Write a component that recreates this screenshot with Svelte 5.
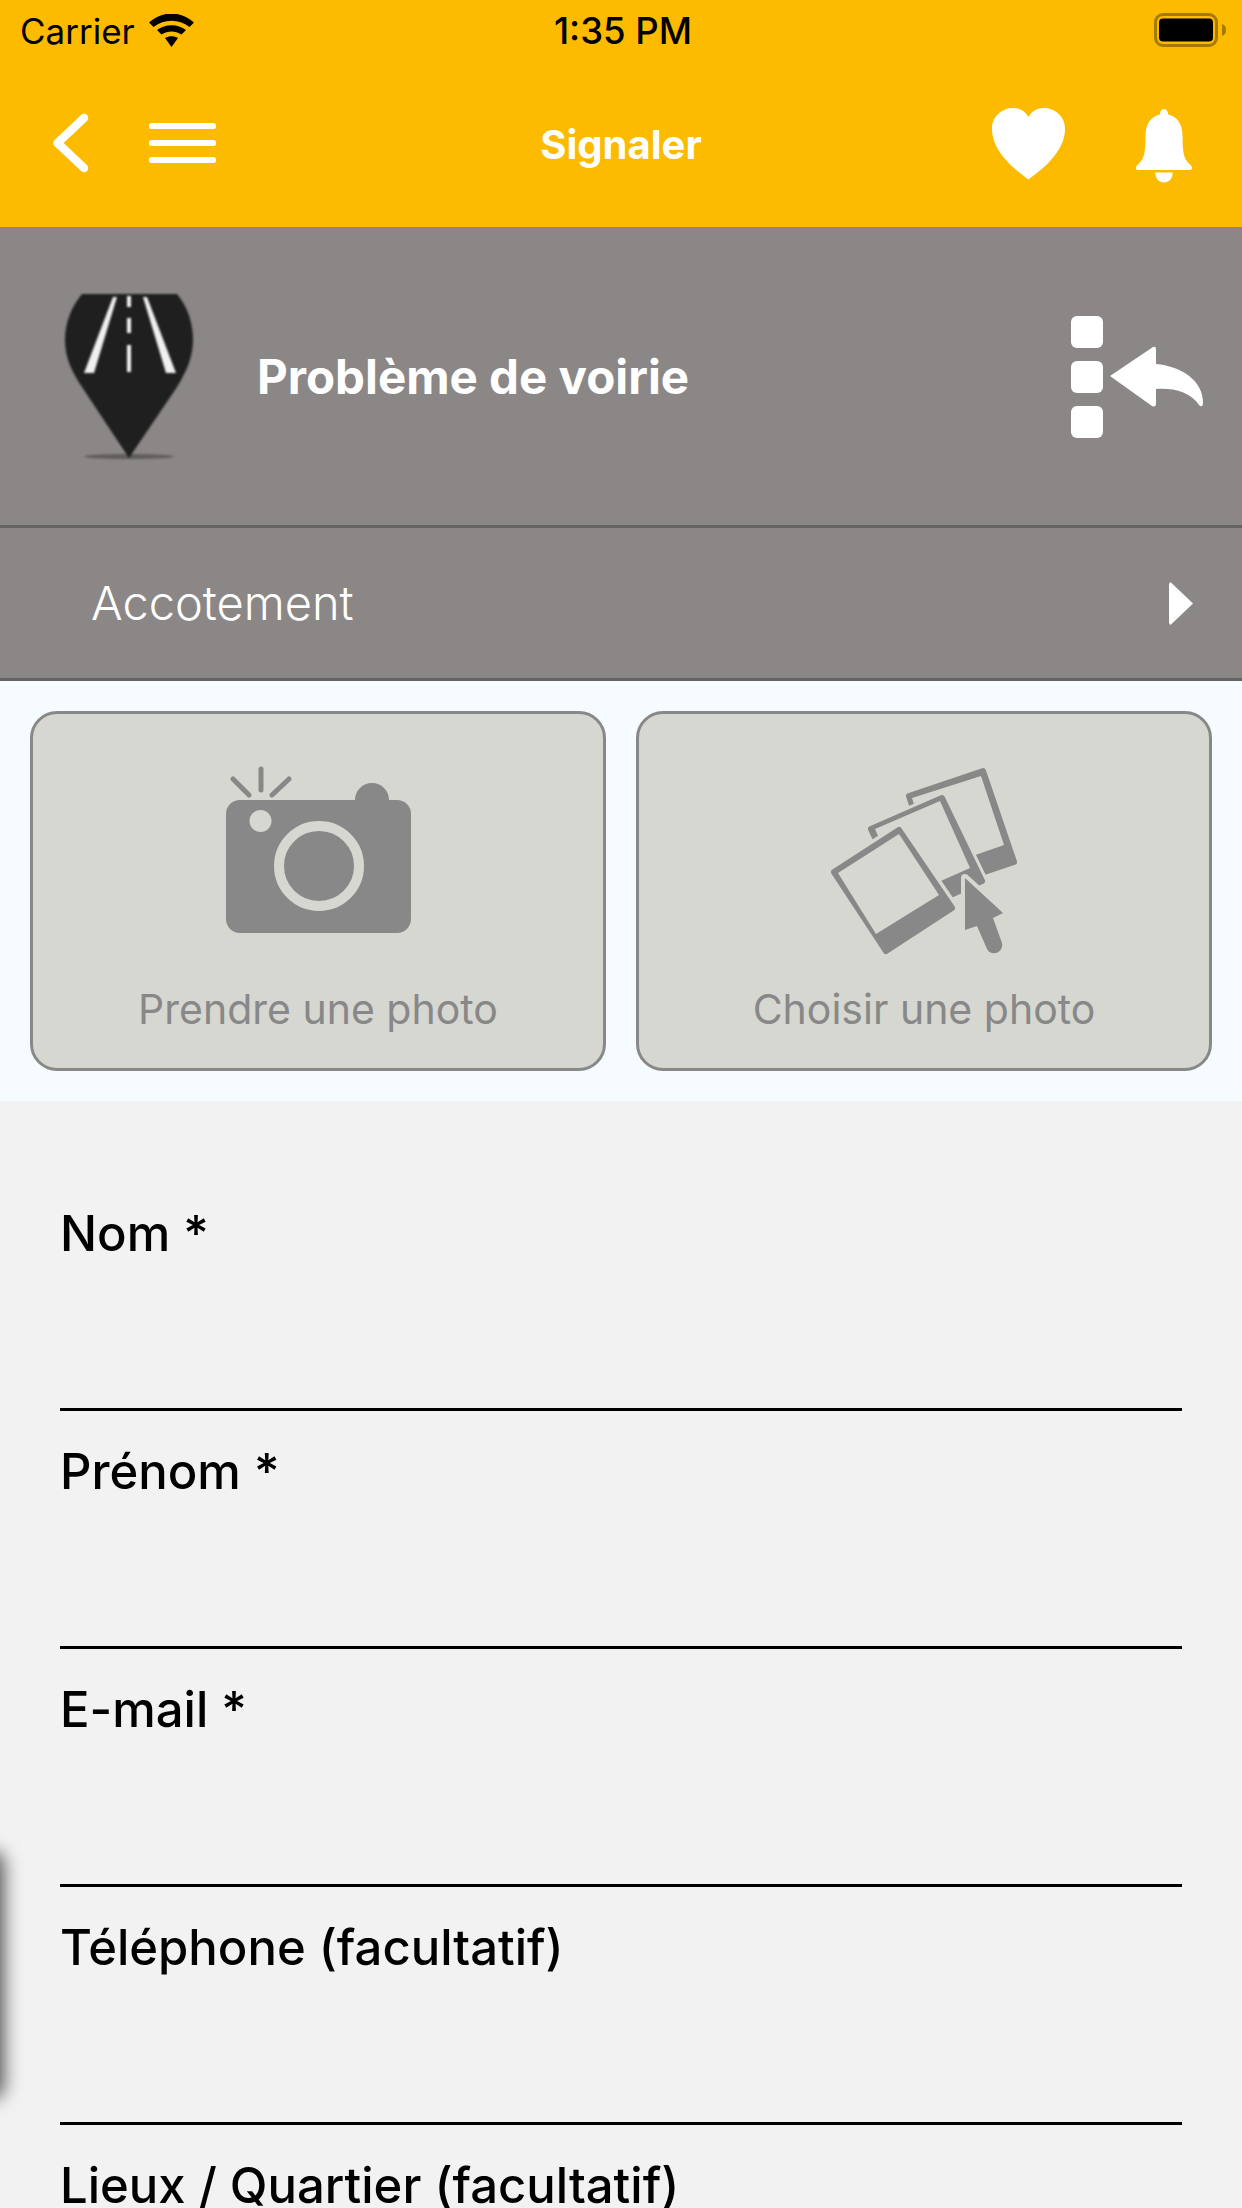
<script>
  const fields = ['Nom *', 'Prénom *', 'E-mail *', 'Téléphone (facultatif)', 'Lieux / Quartier (facultatif)'];
</script>

<div class="page">
  <header class="top">
    <div class="status">
      <div class="st-left">
        <span>Carrier</span>
        <svg class="wifi" viewBox="150 13 45 33">
          <path d="M150 21.500 C163 9.500 182 9.500 195 21.500 L190.500 26 C179.500 17.500 165.500 17.500 154.500 26 Z"/>
          <path d="M158 29 C166 22.500 179 22.500 187 29 L182.500 33.500 C176 29.500 169 29.500 162.500 33.500 Z"/>
          <path d="M166 37 C170 34.500 175 34.500 179 37 L172.500 46 Z"/>
        </svg>
      </div>
      <span class="time">1:35 PM</span>
      <div class="st-right">
        <svg class="battery" viewBox="1154 13 72 34">
          <rect x="1155.500" y="14.500" width="61" height="31" rx="7.500" fill="none" stroke="#a67a00" stroke-width="3"/>
          <rect x="1159" y="18.500" width="54" height="23" rx="4" fill="#000"/>
          <path d="M1222 24 C1225 25 1226 27 1226 30 C1226 33 1225 35 1222 36 Z" fill="#a67a00"/>
        </svg>
      </div>
    </div>
    <nav class="nav">
      <div class="nav-left">
        <svg class="back" viewBox="49 108 40 66">
          <path d="M84 116 L57.500 141 L84 166" fill="none" stroke="#fff" stroke-width="8.500" stroke-linecap="round" stroke-linejoin="round"/>
        </svg>
        <div class="burger"><i></i><i></i><i></i></div>
      </div>
      <div class="title">Signaler</div>
      <div class="nav-right">
        <svg class="heart" viewBox="0 0 62 72" preserveAspectRatio="none">
          <path d="M31 71.500 C20 62 0 44 0 21 C0 8 9 0 18 0 C24 0 28 3 31 9 C34 3 38 0 44 0 C53 0 62 8 62 21 C62 44 42 62 31 71.500 Z" fill="#fff"/>
        </svg>
        <svg class="bell" viewBox="0 0 50 74" preserveAspectRatio="none">
          <path d="M21.500 5.500 C21.500 2 23 0 25 0 C27 0 28.500 2 28.500 5.500 C36 7.500 41 14 41 28 C41 43 42 50 47 55 C50 58 50 61 47 61 L3 61 C0 61 0 58 3 55 C8 50 9 43 9 28 C9 14 14 7.500 21.500 5.500 Z" fill="#fff"/>
          <path d="M17.500 63.500 H32.500 C32.500 70 29 73.500 25 73.500 C21 73.500 17.500 70 17.500 63.500 Z" fill="#fff"/>
        </svg>
      </div>
    </nav>
  </header>

  <section class="banner">
    <svg class="pin" viewBox="60 290 140 172">
      <ellipse cx="129" cy="456.500" rx="45" ry="2.500" fill="#5f5c5b"/>
      <path d="M82 294 H177 C187 306 193 322 193 340 C193 358 186 372 177 387 L129 458 L82 387 C72 372 65 358 65 340 C65 322 72 306 82 294 Z" fill="#1f1f1f"/>
      <path d="M113 297 L117 297 L94 373 L84 373 Z" fill="#f0f0f0"/>
      <path d="M143 297 L147 297 L176 373 L166 373 Z" fill="#f0f0f0"/>
      <path d="M129 296 V307 M129 318 V333 M129 345 V372" stroke="#f0f0f0" stroke-width="4" fill="none"/>
    </svg>
    <div class="cat">Problème de voirie</div>
    <svg class="list-back" viewBox="1071 316 133 122">
      <rect x="1071" y="316" width="32" height="32" rx="6" fill="#fff"/>
      <rect x="1071" y="361" width="32" height="32" rx="6" fill="#fff"/>
      <rect x="1071" y="406" width="32" height="32" rx="6" fill="#fff"/>
      <path d="M1110 376 L1153 347 Q1156 346 1156 349 L1156 364 C1180 366 1204 380 1203 404 Q1202 408 1199 405 C1190 392 1175 388 1156 389 L1156 403 Q1156 408 1152 406 Z" fill="#fff"/>
    </svg>
  </section>

  <section class="sub">
    <span>Accotement</span>
    <svg class="tri" viewBox="0 0 24 43">
      <path d="M1.500 0 L24 21.500 L1.500 43 L0 41 V2 Z" fill="#fff"/>
    </svg>
  </section>

  <section class="photos">
    <div class="card">
      <svg class="cam" viewBox="226 766 186 168">
        <g stroke="#888" stroke-width="5" stroke-linecap="round">
          <path d="M233 779 L249 795 M261 769 V790 M289 779 L272 795"/>
        </g>
        <circle cx="372" cy="800" r="17" fill="#888"/>
        <rect x="226" y="800" width="185" height="133" rx="14" fill="#888"/>
        <circle cx="260.500" cy="821" r="11" fill="#d6d7d1"/>
        <circle cx="319" cy="866" r="40" fill="none" stroke="#d6d7d1" stroke-width="10"/>
      </svg>
      <span>Prendre une photo</span>
    </div>
    <div class="card">
      <svg class="gal" viewBox="828 767 188 188">
        <g stroke-linejoin="round">
          <polygon points="907,796 981,771 1012,862 938,887" fill="#888" stroke="#888" stroke-width="6"/>
          <polygon points="910,798 979,776 1002,845 933,869" fill="#d6d7d1"/>
          <polygon points="869,829 940,798 980,881 908,913" fill="#d6d7d1" stroke="#d6d7d1" stroke-width="12"/>
          <polygon points="869,829 940,798 980,881 908,913" fill="#888" stroke="#888" stroke-width="6"/>
          <polygon points="873,829 938,801 968,868 903,897" fill="#d6d7d1"/>
          <polygon points="832,872 897,830 950,908 884,951" fill="#d6d7d1" stroke="#d6d7d1" stroke-width="13"/>
          <polygon points="832,872 897,830 950,908 884,951" fill="#888" stroke="#888" stroke-width="6"/>
          <polygon points="836,873 897,834 937,895 874,934" fill="#d6d7d1"/>
          <path fill="#888" stroke="#d6d7d1" stroke-width="8" paint-order="stroke" d="M963 878 L1001 913 L991 918 L1000 943 C1002 953 989 957 985 949 L975 926 L963 930 Z"/>
        </g>
      </svg>
      <span>Choisir une photo</span>
    </div>
  </section>

  <form class="form">
    {#each fields as f}
      <div class="field"><span>{f}</span></div>
    {/each}
  </form>

  <div class="edge"></div>
</div>

<style>
  :global(body) { margin: 0; background: #f2f2f2; }
  .page {
    position: relative;
    width: 1242px;
    height: 2208px;
    overflow: hidden;
    font-family: Inter, "Liberation Sans", sans-serif;
    background: #f2f2f2;
  }
  .top { background: #fdbb00; height: 227px; }
  .status {
    height: 62px;
    display: grid;
    grid-template-columns: 1fr auto 1fr;
    align-items: center;
    font-size: 35px;
    color: #000;
    padding: 0 16px 0 20px;
  }
  .st-left { display: flex; align-items: center; gap: 14px; }
  .st-left svg, .st-right svg { margin-bottom: 2px; }
  .st-right { display: flex; justify-content: flex-end; }
  .time { font-weight: 500; font-size: 36.5px; }
  .wifi { width: 45px; height: 33px; }
  .battery { width: 72px; height: 34px; }
  .nav {
    height: 165px;
    display: grid;
    grid-template-columns: 1fr auto 1fr;
    align-items: center;
  }
  .nav-left { display: flex; align-items: center; padding-left: 49px; padding-bottom: 3px; }
  .back { width: 40px; height: 66px; }
  .burger { margin-left: 60px; width: 67px; display: flex; flex-direction: column; gap: 11px; }
  .burger i { display: block; height: 6px; border-radius: 2.5px; background: #fff; }
  .title { color: #fff; font-weight: 700; font-size: 40px; }
  .nav-right { display: flex; justify-content: flex-end; align-items: center; padding-right: 49px; gap: 70px; }
  .heart { width: 73px; height: 72px; margin-bottom: 2px; }
  .bell { width: 58px; height: 74px; margin-top: 3px; }

  .banner {
    height: 298px;
    background: #8b8786;
    border-bottom: 3px solid #666462;
    display: flex;
    align-items: center;
    padding-left: 60px;
  }
  .pin { width: 140px; height: 172px; flex: none; filter: blur(0.8px); }
  .cat { color: #fff; font-weight: 700; font-size: 47.500px; margin-left: 57px; flex: 1; }
  .list-back { width: 133px; height: 122px; margin-right: 38px; margin-top: 2px; flex: none; }

  .sub {
    height: 150px;
    background: #8b8786;
    border-bottom: 3px solid #666462;
    display: flex;
    align-items: center;
    justify-content: space-between;
    padding: 0 49px 0 91px;
    color: #fff;
    font-size: 47px;
    font-weight: 300;
  }
  .sub span { margin-bottom: 2px; }
  .tri { width: 24px; height: 43px; }

  .photos {
    height: 420px;
    box-sizing: border-box;
    background: #f5fbff;
    padding: 30px 30px;
    display: grid;
    grid-template-columns: 1fr 1fr;
    gap: 30px;
  }
  .card {
    border: 3px solid #888;
    border-radius: 27px;
    background: #d6d7d1;
    display: flex;
    flex-direction: column;
    align-items: center;
    color: #888;
    font-size: 41px;
    line-height: 48px;
  }
  .cam { width: 186px; height: 168px; margin: 52px 0 0 2px; }
  .gal { width: 188px; height: 188px; margin-top: 53px; }
  .card span { margin-top: 51px; }
  .gal + span { margin-top: 30px; }

  .form { padding: 72px 60px 0; }
  .field {
    height: 238px;
    box-sizing: border-box;
    padding-top: 31px;
    border-bottom: 3px solid #000;
    font-size: 49px;
    font-weight: 450;
    line-height: 60px;
    color: #000;
  }

  .edge {
    position: absolute;
    left: -40px;
    top: 1855px;
    width: 40px;
    height: 240px;
    border-radius: 10px;
    box-shadow: 0 0 18px 4px rgba(0, 0, 0, 0.65);
  }
</style>
